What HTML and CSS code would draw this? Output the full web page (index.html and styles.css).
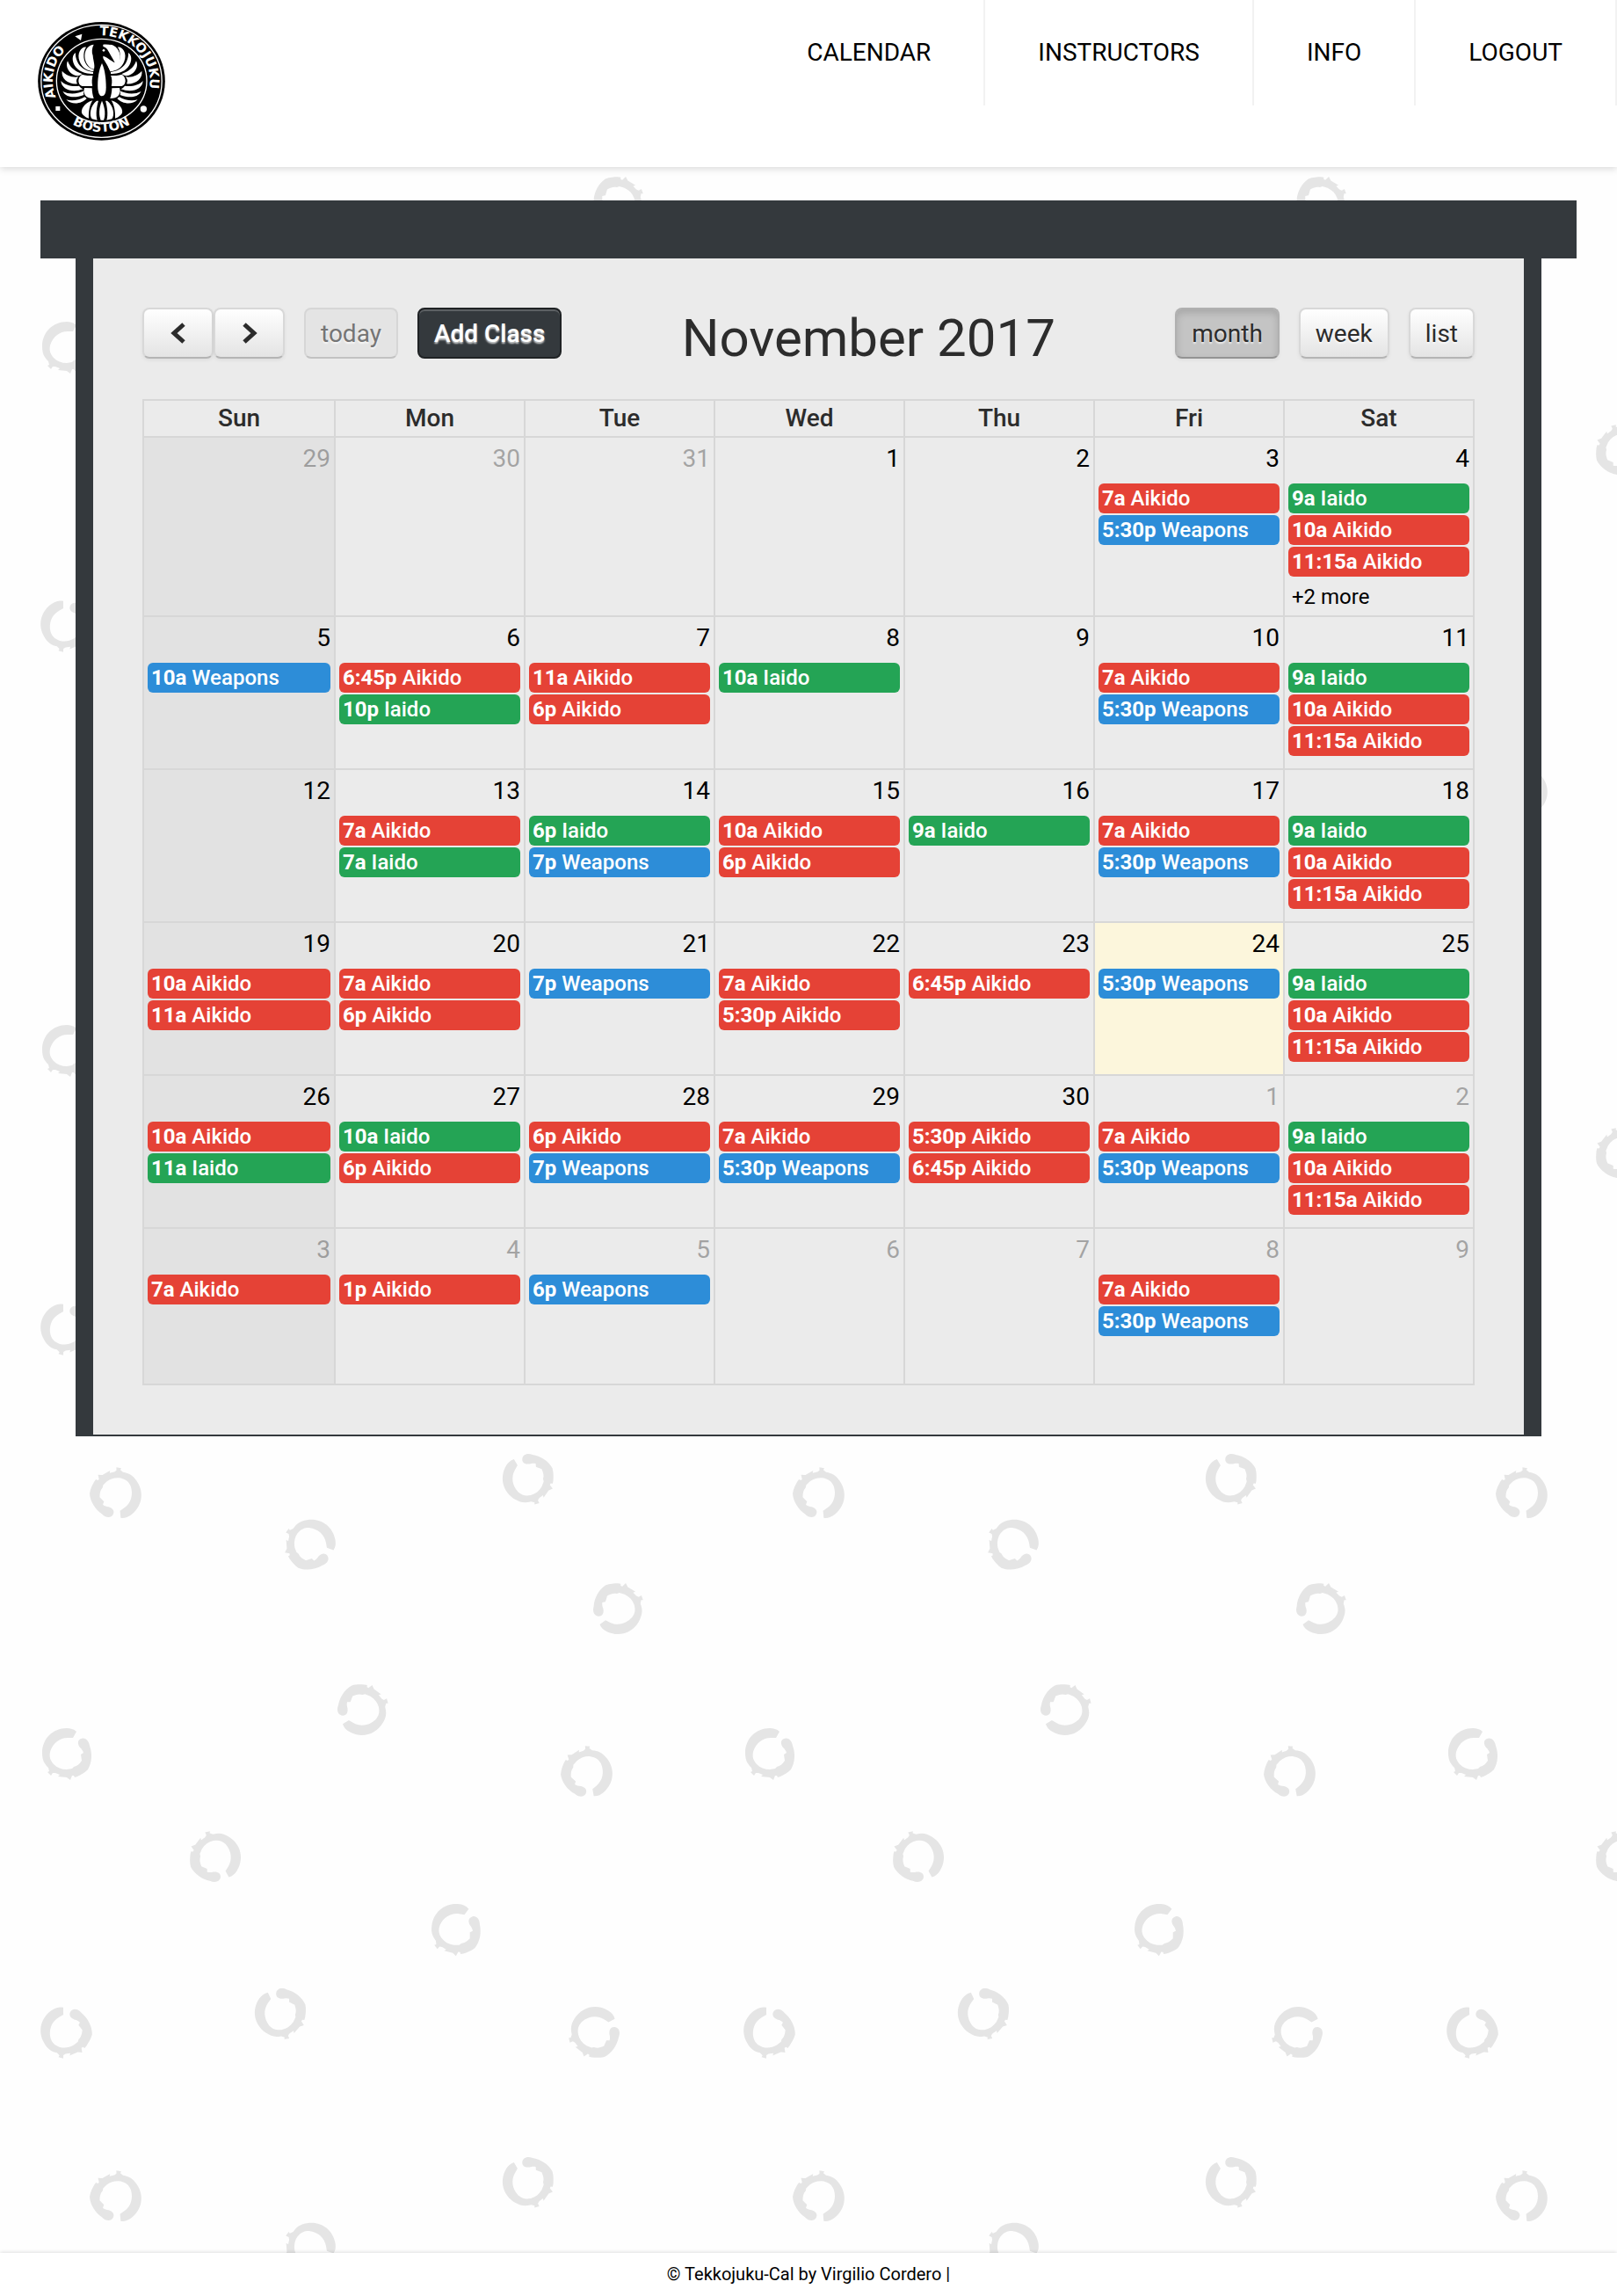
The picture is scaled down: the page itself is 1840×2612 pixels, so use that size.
FILE: index.html
```html
<!DOCTYPE html>
<html lang="en">
<head>
<meta charset="utf-8">
<meta name="viewport" content="width=device-width, initial-scale=1">
<title>Tekkojuku-Cal</title>
<link rel="stylesheet" href="styles.css">
</head>
<body>
<svg class="backdrop" aria-hidden="true">
  <defs>
    <path id="enso" d="M11-25 C8-28 4-29 0-29 C-16-29-28-17-28-1 C-28 7-26 11-21 16 L-20 20 L-22 21 L-18 25 L-16 22 L-13 22 L-8 24 L-10 26 L0 27 L4 30 L6 25 L8 25 L9 27 L12 26 C16 24 20 22 24 18 C29 10 29-1 26-9 C25-16 20-19 16-17 C12-15 12-11 15-7 C17-5 18-4 19-1 L16 1 L17 8 C14 12 12 14 8 15 L6 17 L0 18 C-6 18-11 16-15 12 C-19 7-20 4-19-2 C-16-12-8-18 1-18 L7-18 Z"/>
    <pattern id="rings" width="800" height="800" patternUnits="userSpaceOnUse">
      <g fill="#e5e5e5">
        <use href="#enso" transform="translate(132 100) rotate(145)"/>
        <use href="#enso" transform="translate(601 82) rotate(-60)"/>
        <use href="#enso" transform="translate(353 157) rotate(80)"/>
        <use href="#enso" transform="translate(703 230) rotate(205)"/>
        <use href="#enso" transform="translate(412 345) rotate(210)"/>
        <use href="#enso" transform="translate(76 395)"/>
        <use href="#enso" transform="translate(668 417) rotate(140)"/>
        <use href="#enso" transform="translate(245 513) rotate(122)"/>
        <use href="#enso" transform="translate(519 595) rotate(8)"/>
        <use href="#enso" transform="translate(75 711) rotate(-30)"/>
        <use href="#enso" transform="translate(319 690) rotate(-55)"/>
        <use href="#enso" transform="translate(677 712) rotate(32)"/>
      </g>
    </pattern>
  </defs>
  <rect width="100%" height="100%" fill="url(#rings)"/>
</svg>

<header class="site-header">
  <a class="logo" href="#" aria-label="Aikido Tekkojuku Boston">
    <svg viewBox="36 42 441 411" width="147" height="137">
      <defs>
        <path id="ring-top" d="M128 343 A166 154 0 1 1 384 343"/>
        <path id="ring-bottom" d="M62 260 A196 186 0 0 0 450 260"/>
        <g id="wing">
          <path d="M230 122 C202 124 190 160 208 190 C214 200 224 206 232 206 C234 188 228 176 227 160 C222 148 224 134 230 122Z"/>
          <path d="M204 131 C190 128 170 150 182 180 C190 202 210 212 230 214 L230 208 C208 202 198 184 196 166 C195 150 198 140 204 131Z"/>
          <path d="M168 150 C152 160 156 190 176 206 C190 218 212 222 228 222 L228 216 C200 212 182 198 174 180 C169 168 167 160 168 150Z"/>
          <path d="M141 178 C132 196 144 220 166 227 C176 230 184 228 190 222 C172 216 150 204 141 178Z"/>
          <path d="M122 212 C118 238 142 258 174 256 C168 246 172 238 178 232 C156 236 134 226 122 212Z"/>
          <path d="M118 246 C120 274 154 288 194 274 C188 272 184 268 180 263 C158 266 132 262 118 246Z"/>
          <path d="M124 282 C138 306 170 304 196 294 C194 288 195 284 198 280 C176 290 148 294 124 282Z"/>
          <path d="M136 310 C156 330 190 324 206 306 L199 301 C180 312 156 316 136 310Z"/>
          <path d="M190 224 C174 234 174 258 190 264 L226 264 C222 250 224 236 228 228 C214 228 202 228 190 224Z"/>
          <path d="M198 270 C192 292 204 306 230 306 C226 294 224 282 224 271Z"/>
          <path d="M226 313 C196 322 184 346 190 358 C200 370 210 374 213 374 C212 350 216 328 226 313Z"/>
          <path d="M240 314 C218 330 214 364 224 376 L242 380 C236 360 240 334 246 314Z"/>
        </g>
      </defs>
      <ellipse cx="256.500" cy="247" rx="217" ry="202"/>
      <ellipse cx="256.500" cy="247" rx="206" ry="192" fill="none" stroke="#fff" stroke-width="4"/>
      <ellipse cx="257" cy="246" rx="154" ry="143" fill="none" stroke="#fff" stroke-width="4"/>
      <g fill="#fff">
        <use href="#wing"/>
        <use href="#wing" transform="translate(516 0) scale(-1 1)"/>
        <path d="M258 314 C246 340 248 366 254 380 H264 C270 366 270 340 258 314Z"/>
        <path d="M262 122 C300 118 324 140 320 172 C316 198 302 210 286 214 L262 170Z"/>
        <path d="M166 94 L190 86 L186 108Z"/>
        <rect x="100" y="333" width="15" height="15"/>
        <circle cx="400" cy="342" r="11"/>
      </g>
      <path d="M232 146 C236 124 264 122 276 138 C284 152 294 168 302 184 C288 178 274 164 258 160 C262 178 290 196 290 250 C290 284 284 312 258 312 C232 312 224 284 226 240 C228 200 246 184 232 146Z"/>
      <path d="M258 186 C248 206 242 240 244 272 C246 292 252 298 258 298 C266 298 272 290 272 268 C272 240 268 206 258 186Z" fill="#fff"/>
      <circle cx="264" cy="142" r="4" fill="#fff"/>
      <g class="logo-text">
        <text><textPath href="#ring-top" startOffset="19%" text-anchor="middle">AIKIDO</textPath></text>
        <text><textPath href="#ring-top" startOffset="69%" text-anchor="middle">TEKKOJUKU</textPath></text>
        <text><textPath href="#ring-bottom" startOffset="50%" text-anchor="middle">BOSTON</textPath></text>
      </g>
    </svg>
  </a>
  <nav class="site-nav">
    <a href="#">CALENDAR</a>
    <a href="#">INSTRUCTORS</a>
    <a href="#">INFO</a>
    <a href="#">LOGOUT</a>
  </nav>
</header>

<main class="dojo">
  <div class="roof"></div>
  <section class="walls">
    <div class="toolbar">
      <div class="tools">
        <div class="pair">
          <button class="btn" type="button" aria-label="Previous month"><svg width="20" height="26" viewBox="0 0 20 26"><path d="M16 3 L5 13 L16 23"/></svg></button>
          <button class="btn" type="button" aria-label="Next month"><svg width="20" height="26" viewBox="0 0 20 26"><path d="M4 3 L15 13 L4 23"/></svg></button>
        </div>
        <button class="btn" type="button" disabled>today</button>
        <button class="btn btn-dark" type="button">Add Class</button>
      </div>
      <h2 class="title">November 2017</h2>
      <div class="tools">
        <button class="btn btn-active" type="button">month</button>
        <button class="btn" type="button">week</button>
        <button class="btn" type="button">list</button>
      </div>
    </div>

    <table class="month">
      <colgroup><col class="first-col"><col span="6"></colgroup>
      <thead>
        <tr><th>Sun</th><th>Mon</th><th>Tue</th><th>Wed</th><th>Thu</th><th>Fri</th><th>Sat</th></tr>
      </thead>
      <tbody>
        <tr class="tall">
          <td class="other"><span class="day">29</span></td>
          <td class="other"><span class="day">30</span></td>
          <td class="other"><span class="day">31</span></td>
          <td><span class="day">1</span></td>
          <td><span class="day">2</span></td>
          <td><span class="day">3</span><a class="event aikido" href="#"><b>7a</b> Aikido</a><a class="event weapons" href="#"><b>5:30p</b> Weapons</a></td>
          <td><span class="day">4</span><a class="event iaido" href="#"><b>9a</b> Iaido</a><a class="event aikido" href="#"><b>10a</b> Aikido</a><a class="event aikido" href="#"><b>11:15a</b> Aikido</a><a class="more" href="#">+2 more</a></td>
        </tr>
        <tr>
          <td><span class="day">5</span><a class="event weapons" href="#"><b>10a</b> Weapons</a></td>
          <td><span class="day">6</span><a class="event aikido" href="#"><b>6:45p</b> Aikido</a><a class="event iaido" href="#"><b>10p</b> Iaido</a></td>
          <td><span class="day">7</span><a class="event aikido" href="#"><b>11a</b> Aikido</a><a class="event aikido" href="#"><b>6p</b> Aikido</a></td>
          <td><span class="day">8</span><a class="event iaido" href="#"><b>10a</b> Iaido</a></td>
          <td><span class="day">9</span></td>
          <td><span class="day">10</span><a class="event aikido" href="#"><b>7a</b> Aikido</a><a class="event weapons" href="#"><b>5:30p</b> Weapons</a></td>
          <td><span class="day">11</span><a class="event iaido" href="#"><b>9a</b> Iaido</a><a class="event aikido" href="#"><b>10a</b> Aikido</a><a class="event aikido" href="#"><b>11:15a</b> Aikido</a></td>
        </tr>
        <tr>
          <td><span class="day">12</span></td>
          <td><span class="day">13</span><a class="event aikido" href="#"><b>7a</b> Aikido</a><a class="event iaido" href="#"><b>7a</b> Iaido</a></td>
          <td><span class="day">14</span><a class="event iaido" href="#"><b>6p</b> Iaido</a><a class="event weapons" href="#"><b>7p</b> Weapons</a></td>
          <td><span class="day">15</span><a class="event aikido" href="#"><b>10a</b> Aikido</a><a class="event aikido" href="#"><b>6p</b> Aikido</a></td>
          <td><span class="day">16</span><a class="event iaido" href="#"><b>9a</b> Iaido</a></td>
          <td><span class="day">17</span><a class="event aikido" href="#"><b>7a</b> Aikido</a><a class="event weapons" href="#"><b>5:30p</b> Weapons</a></td>
          <td><span class="day">18</span><a class="event iaido" href="#"><b>9a</b> Iaido</a><a class="event aikido" href="#"><b>10a</b> Aikido</a><a class="event aikido" href="#"><b>11:15a</b> Aikido</a></td>
        </tr>
        <tr>
          <td><span class="day">19</span><a class="event aikido" href="#"><b>10a</b> Aikido</a><a class="event aikido" href="#"><b>11a</b> Aikido</a></td>
          <td><span class="day">20</span><a class="event aikido" href="#"><b>7a</b> Aikido</a><a class="event aikido" href="#"><b>6p</b> Aikido</a></td>
          <td><span class="day">21</span><a class="event weapons" href="#"><b>7p</b> Weapons</a></td>
          <td><span class="day">22</span><a class="event aikido" href="#"><b>7a</b> Aikido</a><a class="event aikido" href="#"><b>5:30p</b> Aikido</a></td>
          <td><span class="day">23</span><a class="event aikido" href="#"><b>6:45p</b> Aikido</a></td>
          <td class="today"><span class="day">24</span><a class="event weapons" href="#"><b>5:30p</b> Weapons</a></td>
          <td><span class="day">25</span><a class="event iaido" href="#"><b>9a</b> Iaido</a><a class="event aikido" href="#"><b>10a</b> Aikido</a><a class="event aikido" href="#"><b>11:15a</b> Aikido</a></td>
        </tr>
        <tr>
          <td><span class="day">26</span><a class="event aikido" href="#"><b>10a</b> Aikido</a><a class="event iaido" href="#"><b>11a</b> Iaido</a></td>
          <td><span class="day">27</span><a class="event iaido" href="#"><b>10a</b> Iaido</a><a class="event aikido" href="#"><b>6p</b> Aikido</a></td>
          <td><span class="day">28</span><a class="event aikido" href="#"><b>6p</b> Aikido</a><a class="event weapons" href="#"><b>7p</b> Weapons</a></td>
          <td><span class="day">29</span><a class="event aikido" href="#"><b>7a</b> Aikido</a><a class="event weapons" href="#"><b>5:30p</b> Weapons</a></td>
          <td><span class="day">30</span><a class="event aikido" href="#"><b>5:30p</b> Aikido</a><a class="event aikido" href="#"><b>6:45p</b> Aikido</a></td>
          <td class="other"><span class="day">1</span><a class="event aikido" href="#"><b>7a</b> Aikido</a><a class="event weapons" href="#"><b>5:30p</b> Weapons</a></td>
          <td class="other"><span class="day">2</span><a class="event iaido" href="#"><b>9a</b> Iaido</a><a class="event aikido" href="#"><b>10a</b> Aikido</a><a class="event aikido" href="#"><b>11:15a</b> Aikido</a></td>
        </tr>
        <tr class="last">
          <td class="other"><span class="day">3</span><a class="event aikido" href="#"><b>7a</b> Aikido</a></td>
          <td class="other"><span class="day">4</span><a class="event aikido" href="#"><b>1p</b> Aikido</a></td>
          <td class="other"><span class="day">5</span><a class="event weapons" href="#"><b>6p</b> Weapons</a></td>
          <td class="other"><span class="day">6</span></td>
          <td class="other"><span class="day">7</span></td>
          <td class="other"><span class="day">8</span><a class="event aikido" href="#"><b>7a</b> Aikido</a><a class="event weapons" href="#"><b>5:30p</b> Weapons</a></td>
          <td class="other"><span class="day">9</span></td>
        </tr>
      </tbody>
    </table>
  </section>
</main>

<footer class="site-footer">© Tekkojuku-Cal by Virgilio Cordero |</footer>
</body>
</html>
```
FILE: styles.css
```css
* { box-sizing: border-box; }

body {
  position: relative;
  display: flex;
  flex-direction: column;
  min-height: 100vh;
  margin: 0;
  background: #fefefe;
  color: #000;
  font-family: Roboto, "Liberation Sans", sans-serif;
  font-size: 28px;
}

a { color: inherit; text-decoration: none; }

.backdrop {
  position: absolute;
  inset: 0;
  z-index: -1;
  width: 100%;
  height: 100%;
}

/* Header */
.site-header {
  display: flex;
  justify-content: space-between;
  align-items: flex-start;
  height: 190px;
  padding-left: 42px;
  background: #fff;
  box-shadow: 0 2px 8px rgba(0, 0, 0, .15);
}
.logo { padding-top: 24px; }
.logo svg { display: block; }
.logo-text {
  fill: #fff;
  font: bold 44px "DejaVu Sans", sans-serif;
}
.site-nav { display: flex; }
.site-nav a {
  padding: 0 60px;
  border-right: 2px solid #f2f2f2;
  line-height: 120px;
}

/* Calendar building */
.dojo { flex: 1; padding: 38px 46px; }
.roof { height: 66px; background: #34393d; }
.walls {
  margin: 0 40px;
  padding: 56px;
  border: solid #34393d;
  border-width: 0 20px 2px;
  background: #ebebeb;
}

.toolbar {
  display: flex;
  justify-content: space-between;
  align-items: flex-start;
  margin-bottom: 34px;
}
.tools { display: flex; gap: 22px; }
.pair { display: flex; }
.pair .btn { width: 81px; }
.title {
  margin: 0;
  color: #2c2c2c;
  font-size: 60px;
  font-weight: 400;
  line-height: 70px;
}

.btn {
  display: flex;
  justify-content: center;
  align-items: center;
  height: 58px;
  padding: 0 17px;
  border: 2px solid #d8d8d8;
  border-bottom-color: #b4b4b4;
  border-radius: 8px;
  background: #f5f5f5 linear-gradient(#fff, #e4e4e4);
  box-shadow: 0 2px 4px rgba(0, 0, 0, .06);
  color: #2c2c2c;
  font: inherit;
  text-shadow: 0 2px 2px rgba(255, 255, 255, .75);
}
.btn svg { fill: none; stroke: #2c2c2c; stroke-width: 5; }
.btn:disabled {
  border-color: #d6d6d6;
  border-bottom-color: #c2c2c2;
  background: #e4e4e4;
  box-shadow: none;
  color: #757575;
}
.btn-active {
  border-color: #b0b0b0;
  border-bottom-color: #939393;
  background: #c4c4c4;
  box-shadow: inset 0 4px 8px rgba(0, 0, 0, .15), 0 2px 4px rgba(0, 0, 0, .05);
}
.btn-dark {
  border-color: #1f2224;
  background: #34393d;
  box-shadow: inset 0 2px 0 rgba(255, 255, 255, .2);
  color: #fff;
  font-weight: 500;
}

/* Month table */
.month {
  width: 100%;
  border: solid #d7d7d7;
  border-width: 0 2px 2px 0;
  border-spacing: 0;
  table-layout: fixed;
}
.first-col { width: 218px; }
.month th, .month td {
  border: solid #d7d7d7;
  border-width: 2px 0 0 2px;
}
.month th {
  height: 42px;
  padding: 0;
  color: #2c2c2c;
  font-weight: 500;
  line-height: 40px;
}
.month td {
  height: 174px;
  padding: 0 4px;
  vertical-align: top;
}
.month .tall td { height: 204px; }
.month .last td { height: 178px; }
.month td:first-child { background: #e2e2e2; }
.month .today { background: #fcf6dc; }

.day {
  display: block;
  margin-bottom: 4px;
  line-height: 48px;
  text-align: right;
}
.other .day { opacity: .3; }

.event {
  display: block;
  margin-bottom: 2px;
  padding: 0 4px;
  border-radius: 6px;
  color: #fff;
  font-size: 24px;
  font-weight: 500;
  line-height: 34px;
  white-space: nowrap;
  overflow: hidden;
}
.event b { font-weight: 700; }
.aikido { background: #e54236; }
.iaido { background: #24a455; }
.weapons { background: #2d8dd8; }

.more {
  display: block;
  padding: 4px 4px 0;
  font-size: 24px;
  line-height: 34px;
}

/* Footer */
.site-footer {
  padding: 12px 0;
  background: #fff;
  box-shadow: 0 -1px 4px rgba(0, 0, 0, .12);
  font-size: 20px;
  line-height: 25px;
  text-align: center;
}
```
